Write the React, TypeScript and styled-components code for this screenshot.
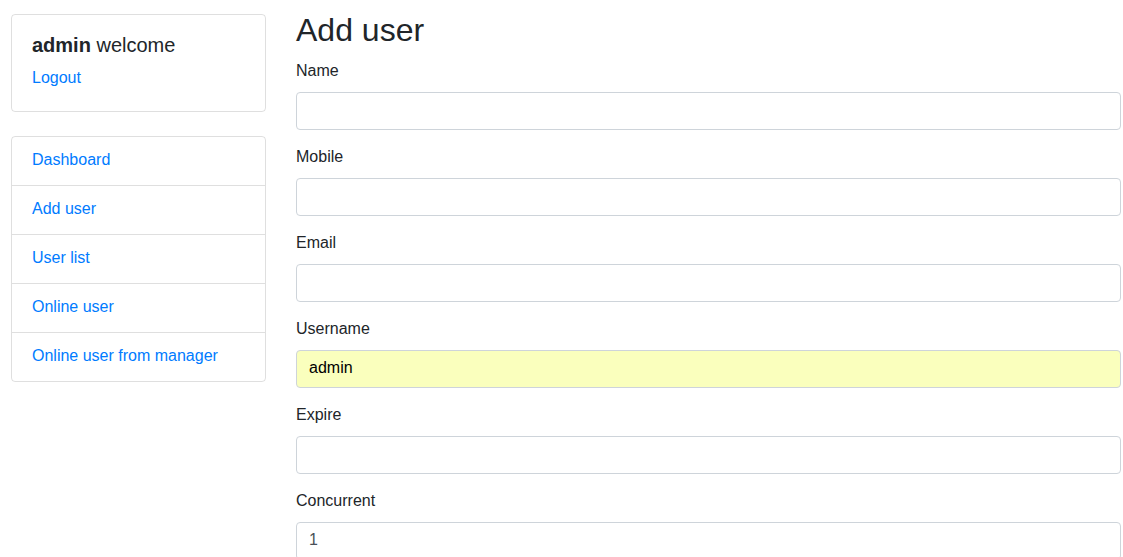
import styled, { createGlobalStyle } from 'styled-components';

const GlobalStyle = createGlobalStyle`
  body {
    margin: 0;
    font-family: "Liberation Sans", Arial, sans-serif;
    font-size: 16px;
    line-height: 1.5;
    color: #212529;
    background: #fff;
  }
  * { box-sizing: border-box; }
`

const Page = styled.div`
  display: flex;
  gap: 30px;
  padding: 14px 2px 0 11px;
`

const Sidebar = styled.aside`
  width: 255px;
  flex-shrink: 0;
  display: flex;
  flex-direction: column;
  gap: 24px;
`

const Card = styled.div`
  border: 1px solid rgba(0, 0, 0, 0.125);
  border-radius: 4px;
  padding: 20px 20px 20px;
`

const Welcome = styled.h5`
  margin: 0 0 8px;
  padding-bottom: 4px;
  font-size: 20px;
  font-weight: 400;
  line-height: 20px;
`

const Link = styled.a`
  color: #007bff;
  text-decoration: none;
`

const LogoutLine = styled.div`
  line-height: 22px;
  padding-bottom: 2px;
`

const NavList = styled.ul`
  list-style: none;
  margin: 0;
  padding: 0;
  border: 1px solid rgba(0, 0, 0, 0.125);
  border-radius: 4px;
`

const NavItem = styled.li`
  padding: 11px 20px 13px;
  & + & {
    border-top: 1px solid rgba(0, 0, 0, 0.125);
  }
`

const Main = styled.main`
  flex: 1;
`

const Title = styled.h2`
  margin: 0 0 8px;
  padding-bottom: 6px;
  font-size: 32px;
  font-weight: 400;
  line-height: 32.4px;
`

const Group = styled.div`
  margin-bottom: 16px;
`

const Label = styled.label`
  display: block;
  margin-bottom: 8px;
  line-height: 22px;
  padding-bottom: 2px;
`

const Input = styled.input<{ $autofill?: boolean }>`
  display: block;
  width: 100%;
  height: 38px;
  padding: 5px 12px 7px;
  font-family: inherit;
  font-size: 16px;
  line-height: 1.5;
  color: ${(p) => (p.$autofill ? '#000' : '#495057')};
  background: ${(p) => (p.$autofill ? '#faffbd' : '#fff')};
  border: 1px solid #ced4da;
  border-radius: 4px;
  outline: none;
`

const fields = [
  { label: 'Name', value: '' },
  { label: 'Mobile', value: '' },
  { label: 'Email', value: '' },
  { label: 'Username', value: 'admin', autofill: true },
  { label: 'Expire', value: '' },
  { label: 'Concurrent', value: '1' },
]

const links = ['Dashboard', 'Add user', 'User list', 'Online user', 'Online user from manager']

export default function App() {
  return (
    <>
      <GlobalStyle />
      <Page>
        <Sidebar>
          <Card>
            <Welcome>
              <b>admin</b> welcome
            </Welcome>
            <LogoutLine>
              <Link href='#'>Logout</Link>
            </LogoutLine>
          </Card>
          <NavList>
            {links.map((l) => (
              <NavItem key={l}>
                <Link href='#'>{l}</Link>
              </NavItem>
            ))}
          </NavList>
        </Sidebar>
        <Main>
          <Title>Add user</Title>
          {fields.map((f) => (
            <Group key={f.label}>
              <Label>{f.label}</Label>
              <Input defaultValue={f.value} $autofill={f.autofill} />
            </Group>
          ))}
        </Main>
      </Page>
    </>
  )
}
